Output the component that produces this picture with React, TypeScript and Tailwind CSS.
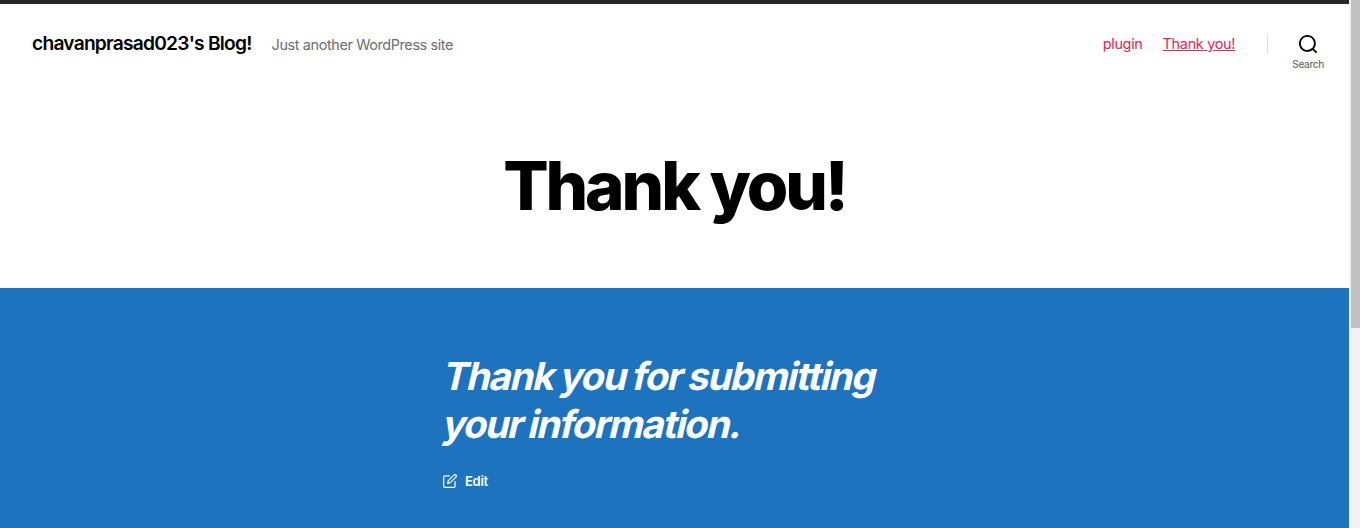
export default function App() {
  return (
    <div className="flex h-[528px] w-[1360px] overflow-hidden bg-white font-['Inter',sans-serif] [font-optical-sizing:none]">
      <div className="flex w-[1349px] flex-col">
        <div className="h-1 shrink-0 bg-[#23282d]" />
        <header className="flex h-[126px] shrink-0 items-start justify-between pl-8 pr-[25px] pt-[27px]">
          <div className="flex items-baseline gap-5">
            <a className="text-[19.2px] font-semibold leading-6 tracking-[-0.77px] text-black">chavanprasad023's Blog!</a>
            <span className="text-[14.4px] leading-5 tracking-[-0.37px] text-[#6d6d6d]">Just another WordPress site</span>
          </div>
          <div className="flex items-start pt-px">
            <nav className="flex gap-5 pt-[2px] text-[14.4px] leading-5 tracking-[-0.28px] text-[#e22658]">
              <a>plugin</a>
              <a className="underline">Thank you!</a>
            </nav>
            <div className="ml-8 mt-px h-[21px] w-px bg-[#dcdcdc]" />
            <button className="ml-6 flex flex-col items-center pt-[3px]">
              <svg width="18.4" height="18.4" viewBox="0 0 23 23">
                <path d="M38.710696,48.0601792 L43,52.3494831 L41.3494831,54 L37.0601792,49.710696 C35.2632422,51.1481185 32.9839107,52.0076499 30.5038249,52.0076499 C24.7027226,52.0076499 20,47.3049272 20,41.5038249 C20,35.7027226 24.7027226,31 30.5038249,31 C36.3049272,31 41.0076499,35.7027226 41.0076499,41.5038249 C41.0076499,43.9839107 40.1481185,46.2632422 38.710696,48.0601792 Z M36.3875844,47.1716785 C37.8030221,45.7026647 38.6734666,43.7048964 38.6734666,41.5038249 C38.6734666,36.9918565 35.0157934,33.3341833 30.5038249,33.3341833 C25.9918565,33.3341833 22.3341833,36.9918565 22.3341833,41.5038249 C22.3341833,46.0157934 25.9918565,49.6734666 30.5038249,49.6734666 C32.7048964,49.6734666 34.7026647,48.8030221 36.1716785,47.3875844 Z" transform="translate(-20 -31)" />
              </svg>
              <span className="mt-[4.6px] text-[10px] font-medium leading-3 tracking-[-0.3px] text-[#6d6d6d]">Search</span>
            </button>
          </div>
        </header>
        <div className="flex h-[158px] shrink-0 justify-center pt-5">
          <h1 className="whitespace-nowrap text-[67.2px] font-extrabold leading-[72px] tracking-[-3.1px] text-black">Thank you!</h1>
        </div>
        <main className="flex-1 bg-[#1e73be] pl-[443px] pt-16 text-white">
          <h2 className="-ml-[2.5px] flex w-[464px] flex-col items-start text-[38.4px] font-bold leading-12 tracking-[-1.35px] [word-spacing:-1.5px]">
            <span className="origin-[0_38px] -skew-x-[13deg] whitespace-nowrap">Thank you for submitting</span>
            <span className="origin-[0_38px] -skew-x-[13deg] whitespace-nowrap tracking-[-1.5px]">your information.</span>
          </h2>
          <a className="mt-[23px] flex items-center gap-2 text-[13px] font-semibold leading-5 tracking-[-0.3px]">
            <svg width="14" height="14" viewBox="0 0 14 14" fill="none" stroke="currentColor" strokeWidth="1.2" strokeLinecap="round" strokeLinejoin="round">
              <path d="M6.4 1.9H2A1.3 1.3 0 0 0 .7 3.2V12A1.3 1.3 0 0 0 2 13.3H10.8A1.3 1.3 0 0 0 12.1 12V7.6" />
              <path d="M10.9 1.1A1.25 1.25 0 0 1 12.9 3.1L7.3 8.7L4.7 9.3L5.3 6.7Z" />
            </svg>
            Edit
          </a>
        </main>
      </div>
      <div className="w-[11px] bg-[#f1f1f1] pl-0.5"><div className="h-[328px] bg-[#c1c1c1]" /></div>
    </div>
  );
}
